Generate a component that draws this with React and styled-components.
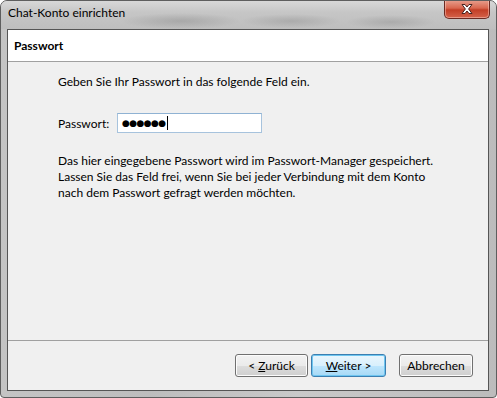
import React from "react";
import styled, { createGlobalStyle } from "styled-components";

const GlobalStyle = createGlobalStyle`
  html, body {
    margin: 0;
    padding: 0;
    background: #ffffff;
  }
  body {
    font-family: Lato, "Noto Sans", sans-serif;
    font-size: 12px;
    color: #000;
  }
`;

const Frame = styled.div`
  width: 497px;
  height: 398px;
  box-sizing: border-box;
  border: 1px solid #5e5e5e;
  border-radius: 7px 7px 4px 4px;
  background: linear-gradient(90deg, #c4c4c4 0%, #bdbdbd 30%, #c9c9c9 60%, #bcbcbc 100%);
  display: flex;
  flex-direction: column;
  overflow: hidden;
`;

const TitleBar = styled.div`
  height: 28px;
  display: flex;
  align-items: flex-start;
  justify-content: space-between;
  padding-left: 7px;
  background:
    radial-gradient(ellipse 60px 8px at 180px 20px, rgba(120, 120, 120, 0.35), transparent),
    radial-gradient(ellipse 50px 7px at 290px 20px, rgba(120, 120, 120, 0.3), transparent),
    radial-gradient(ellipse 45px 7px at 390px 21px, rgba(120, 120, 120, 0.3), transparent),
    linear-gradient(180deg, #d8d8d8 0%, #c6c6c6 40%, #bebebe 100%);
`;

const Title = styled.div`
  margin-top: 4px;
  font-size: 12px;
  color: #000;
`;

const CloseButton = styled.div`
  width: 46px;
  height: 19px;
  margin-right: 6px;
  margin-top: -1px;
  box-sizing: border-box;
  border: 1px solid #6b2a22;
  border-top: none;
  border-radius: 0 0 5px 5px;
  background: linear-gradient(180deg, #e8a190 0%, #d9674f 45%, #c23e26 55%, #d5624a 100%);
  box-shadow: inset 0 0 0 1px rgba(255, 220, 210, 0.45);
  display: flex;
  align-items: center;
  justify-content: center;
`;

const Client = styled.div`
  flex: 1;
  margin: 0 7px 6px 6px;
  border: 1px solid #555;
  background: #f0f0f0;
  display: flex;
  flex-direction: column;
`;

const Header = styled.div`
  height: 31px;
  background: #fff;
  border-bottom: 1px solid #a0a0a0;
  display: flex;
  align-items: center;
  padding-left: 6px;
  font-weight: bold;
`;

const Body = styled.div`
  flex: 1;
  padding: 12px 20px 0 50px;
  display: flex;
  flex-direction: column;
`;

const Text = styled.p`
  margin: 0;
  line-height: 16px;
`;

const FieldRow = styled.div`
  display: flex;
  align-items: center;
  margin: 23px 0 20px;
`;

const Label = styled.span`
  width: 59px;
`;

const PasswordBox = styled.div`
  width: 145px;
  height: 20px;
  box-sizing: border-box;
  border: 1px solid #a7c3dd;
  border-top-color: #8fb2d3;
  background: #fff;
  display: flex;
  align-items: center;
  padding-left: 4px;
  font-family: "DejaVu Sans", sans-serif;
  font-size: 9px;
  letter-spacing: -0.6px;
`;

const Caret = styled.span`
  display: inline-block;
  width: 1px;
  height: 14px;
  background: #000;
  margin-left: 1px;
`;

const Footer = styled.div`
  height: 50px;
  box-sizing: border-box;
  border-top: 1px solid #a0a0a0;
  display: flex;
  justify-content: flex-end;
  align-items: flex-start;
  padding: 13px 15px 0 0;
`;

const Button = styled.button`
  width: ${(p) => (p.$w ? p.$w : 74)}px;
  height: 23px;
  margin-left: ${(p) => (p.$gap ? p.$gap : 0)}px;
  box-sizing: border-box;
  border: 1px solid ${(p) => (p.$default ? "#3c7fb1" : "#707070")};
  border-radius: 3px;
  background: ${(p) =>
    p.$default
      ? "linear-gradient(180deg, #eaf6fd 0%, #d9f0fc 50%, #bee6fd 51%, #a7d9f5 100%)"
      : "linear-gradient(180deg, #f2f2f2 0%, #ebebeb 50%, #dddddd 51%, #cfcfcf 100%)"};
  box-shadow: inset 0 0 0 1px ${(p) => (p.$default ? "#6ec6f0" : "#fcfcfc")};
  font-family: Lato, "Noto Sans", sans-serif;
  font-size: 12px;
  color: #000;
  padding: 0;
  u {
    text-decoration: underline;
  }
`;

const CloseIcon = () => (
  <svg width="14" height="12" viewBox="0 0 14 12">
    <path
      d="M2 1.5 L5 1.5 L7 4 L9 1.5 L12 1.5 L8.6 6 L12 10.5 L9 10.5 L7 8 L5 10.5 L2 10.5 L5.4 6 Z"
      fill="#ffffff"
      stroke="#4a2420"
      strokeWidth="1"
      strokeLinejoin="round"
    />
  </svg>
);

export default function App() {
  return (
    <>
      <GlobalStyle />
      <Frame>
        <TitleBar>
          <Title>Chat-Konto einrichten</Title>
          <CloseButton>
            <CloseIcon />
          </CloseButton>
        </TitleBar>
        <Client>
          <Header>Passwort</Header>
          <Body>
            <Text>Geben Sie Ihr Passwort in das folgende Feld ein.</Text>
            <FieldRow>
              <Label>Passwort:</Label>
              <PasswordBox>
                ●●●●●●
                <Caret />
              </PasswordBox>
            </FieldRow>
            <Text>
              Das hier eingegebene Passwort wird im Passwort-Manager gespeichert.
              <br />
              Lassen Sie das Feld frei, wenn Sie bei jeder Verbindung mit dem Konto
              <br />
              nach dem Passwort gefragt werden möchten.
            </Text>
          </Body>
          <Footer>
            <Button $w={73}>
              &lt; <u>Z</u>urück
            </Button>
            <Button $default $w={75} $gap={3}>
              <u>W</u>eiter &gt;
            </Button>
            <Button $gap={13}>Abbrechen</Button>
          </Footer>
        </Client>
      </Frame>
    </>
  );
}
